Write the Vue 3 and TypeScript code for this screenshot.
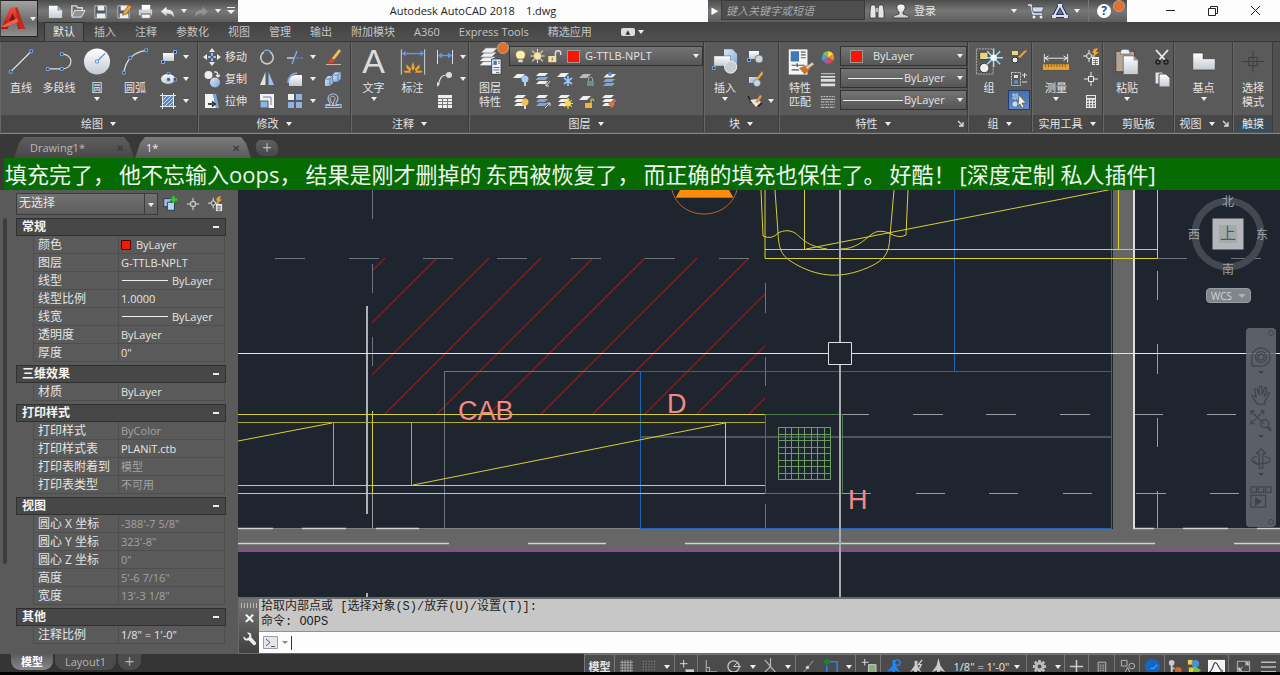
<script setup lang="ts">
import { ref } from 'vue'

interface Prop { label: string; value: string; dim?: boolean; mark?: 'swatch' | 'line' }
interface Group { title: string; rows: Prop[] }

const quick = [
  { id: 'new', label: '新建' }, { id: 'open', label: '打开' }, { id: 'save', label: '保存' },
  { id: 'saveas', label: '另存为' }, { id: 'print', label: '打印' }, { id: 'undo', label: '放弃' },
  { id: 'tri', label: '放弃列表' }, { id: 'redo', label: '重做' }, { id: 'tri', label: '重做列表' },
  { id: 'custom', label: '自定义' },
]
const tabs = ['默认', '插入', '注释', '参数化', '视图', '管理', '输出', '附加模块', 'A360', 'Express Tools', '精选应用']
const activeTab = ref('默认')
const drawTools = [
  { id: 'line', label: '直线', drop: false }, { id: 'pline', label: '多段线', drop: false },
  { id: 'circle', label: '圆', drop: true }, { id: 'arc', label: '圆弧', drop: true },
]
const drawSmall = [{ id: 'rect', label: '矩形' }, { id: 'ellipse', label: '椭圆' }, { id: 'hatch', label: '图案填充' }]
const modifyTools = [{ id: 'move', label: '移动' }, { id: 'copy', label: '复制' }, { id: 'stretch', label: '拉伸' }]
const modifySmall = [
  { id: 'rotate', label: '旋转' }, { id: 'trim', label: '修剪' }, { id: 'erase', label: '删除' },
  { id: 'mirror', label: '镜像' }, { id: 'fillet', label: '圆角' }, { id: 'explode', label: '分解' },
  { id: 'scale', label: '缩放' }, { id: 'array', label: '阵列' }, { id: 'offset', label: '偏移' },
]
const layerTools = [
  { id: 'lyoff', label: '关' }, { id: 'lyiso', label: '隔离' }, { id: 'lyfrz', label: '冻结' },
  { id: 'lylock', label: '锁定' }, { id: 'lycur', label: '置为当前' }, { id: 'lyon', label: '打开所有图层' },
  { id: 'lyuniso', label: '取消隔离' }, { id: 'lythaw', label: '解冻' }, { id: 'lyunlock', label: '解锁' },
  { id: 'lymatch', label: '匹配图层' },
]
const groups: Group[] = [
  { title: '常规', rows: [
    { label: '颜色', value: 'ByLayer', mark: 'swatch' }, { label: '图层', value: 'G-TTLB-NPLT' },
    { label: '线型', value: 'ByLayer', mark: 'line' }, { label: '线型比例', value: '1.0000' },
    { label: '线宽', value: 'ByLayer', mark: 'line' }, { label: '透明度', value: 'ByLayer' },
    { label: '厚度', value: '0"' }] },
  { title: '三维效果', rows: [{ label: '材质', value: 'ByLayer' }] },
  { title: '打印样式', rows: [
    { label: '打印样式', value: 'ByColor', dim: true }, { label: '打印样式表', value: 'PLANiT.ctb' },
    { label: '打印表附着到', value: '模型', dim: true }, { label: '打印表类型', value: '不可用', dim: true }] },
  { title: '视图', rows: [
    { label: '圆心 X 坐标', value: '-388\'-7 5/8"', dim: true }, { label: '圆心 Y 坐标', value: '323\'-8"', dim: true },
    { label: '圆心 Z 坐标', value: '0"', dim: true }, { label: '高度', value: '5\'-6 7/16"', dim: true },
    { label: '宽度', value: '13\'-3 1/8"', dim: true }] },
  { title: '其他', rows: [{ label: '注释比例', value: '1/8" = 1\'-0"' }] },
]
const caption = ['填充完了，', '他不忘输入oops，', '结果是刚才删掉的', '东西被恢复了，', '而正确的填充也保住了。', '好酷！', '[深度定制 私人插件]']
const statusA = [
  { id: 'grid', label: '栅格' }, { id: 'snap', label: '捕捉' }, { id: 'tri', label: '捕捉设置', end: true },
  { id: 'dyn', label: '动态输入', end: true }, { id: 'ortho', label: '正交' }, { id: 'polar', label: '极轴追踪' },
  { id: 'tri', label: '极轴设置' }, { id: 'isod', label: '等轴测草图' }, { id: 'tri', label: '等轴测设置', end: true },
  { id: 'otrack', label: '对象捕捉追踪' }, { id: 'osnap', label: '对象捕捉' }, { id: 'tri', label: '对象捕捉设置', end: true },
  { id: 'cycle', label: '选择循环', end: true }, { id: 'annvis', label: '注释可见性' },
  { id: 'annauto', label: '自动缩放' }, { id: 'ann', label: '注释比例' },
]
const statusB = [
  { id: 'gear', label: '切换工作空间' }, { id: 'tri', label: '工作空间列表', end: true }, { id: 'plus', label: '注释监视器', end: true },
  { id: 'qp', label: '快捷特性', end: true }, { id: 'isolate', label: '隔离对象', end: true }, { id: 'perf', label: '硬件加速', end: true },
  { id: 'key', label: '许可' }, { id: 'trusted', label: '受信任' }, { id: 'wave', label: '性能', end: true },
  { id: 'full', label: '全屏显示' }, { id: 'menu', label: '自定义' },
]
const hatch = Array.from({ length: 11 }, (_, i) => 229 + i * 52)
const cells = Array.from({ length: 9 }, (_, i) => i)
const command = ref('')
</script>

<template>
  <div class="app">
    <svg class="sprite" aria-hidden="true">
      <defs>
        <linearGradient id="gw" x1="0" y1="0" x2="0" y2="1"><stop offset="0" stop-color="#fff" /><stop offset="1" stop-color="#c3cad2" /></linearGradient>
        <linearGradient id="gb" x1="0" y1="0" x2="1" y2="1"><stop offset="0" stop-color="#dbe8f7" /><stop offset="1" stop-color="#7da7da" /></linearGradient>
        <linearGradient id="gr" x1="0" y1="0" x2="0" y2="1"><stop offset="0" stop-color="#ef5340" /><stop offset="1" stop-color="#a81610" /></linearGradient>
        <g id="sheets"><path d="M5 3h9l-3 3H2z" /><path d="M5 7h9l-3 3H2z" /><path d="M5 11h9l-3 3H2z" /></g>
      </defs>
      <symbol id="tri" viewBox="0 0 8 8"><path d="M1 2h6L4 6z" fill="#eee" /></symbol>
      <symbol id="custom" viewBox="0 0 10 10"><path d="M1 1h8v1H1zM1 4h8L5 8z" fill="#eee" /></symbol>
      <symbol id="logo" viewBox="0 0 34 32"><path d="M0 28 11 2h9l9 26h-8l-2-7h-8l-3 7z" fill="url(#gr)" /><path d="m14 9 4 9h-8z" fill="#7c1712" /><path d="m0 25 19-10 3 4L5 26z" fill="#f0614e" /><path d="M17 2h3l9 26h-6z" fill="#c02a20" /></symbol>

      <symbol id="new" viewBox="0 0 18 18"><path d="M2 3h9l5 5v8H2z" fill="url(#gw)" /><path d="M11 3v5h5z" fill="#9a9fa5" /></symbol>
      <symbol id="open" viewBox="0 0 18 18"><path d="M3 14V3h5l1 2h5v3" fill="none" stroke="#dcdcdc" stroke-width="1.5" /><path d="m3 15 3-7h11l-4 7z" fill="#8d9299" stroke="#e3e3e3" /></symbol>
      <symbol id="save" viewBox="0 0 18 18"><path d="M3 3h12v13H3z" fill="#555b63" stroke="#b8bec6" /><path d="M6 3h7v5H6zM5 11h9v5H5z" fill="#edf0f3" /></symbol>
      <symbol id="saveas" viewBox="0 0 18 18"><path d="M3 3h12v13H3z" fill="#555b63" stroke="#b8bec6" /><path d="M6 3h7v5H6zM5 11h9v5H5z" fill="#edf0f3" /><path d="m8 13 1-4 6-7 3 2-6 8z" fill="#e8a33a" stroke="#6b4512" stroke-width=".6" /></symbol>
      <symbol id="print" viewBox="0 0 18 18"><path d="M5 2h9v6H5z" fill="#fff" /><path d="M2 7h14v6H2z" fill="#cfd4da" /><path d="M4 11h11v2H4z" fill="#6a7078" /><path d="M5 12h9v4H5z" fill="#f4f4f4" stroke="#888" stroke-width=".6" /></symbol>
      <symbol id="undo" viewBox="0 0 18 18"><path d="M2 9 8 4v3c6 0 8 3 8 8-2-3-4-4-8-4v3z" fill="url(#gw)" /></symbol>
      <symbol id="redo" viewBox="0 0 18 18"><path d="M16 9 10 4v3c-6 0-8 3-8 8 2-3 4-4 8-4v3z" fill="#929292" /></symbol>

      <symbol id="line" viewBox="0 0 30 30"><path d="M4 26 26 4" stroke="#ddd" stroke-width="1.3" /><path d="M2.500 24.500h3v3h-3zM24.500 2.500h3v3h-3z" fill="#25364d" stroke="#7eb0f0" /></symbol>
      <symbol id="pline" viewBox="0 0 30 30"><path d="M3 23h15c13 0 13-16 0-16" fill="none" stroke="#ddd" stroke-width="1.3" /><path d="M1.500 21.500h3v3h-3zM16.500 21.500h3v3h-3zM16.500 5.500h3v3h-3z" fill="#25364d" stroke="#7eb0f0" /></symbol>
      <symbol id="circle" viewBox="0 0 30 30"><circle cx="15" cy="15" r="14" fill="url(#gw)" /><path d="m15 15 9-9" stroke="#5c92d8" stroke-width="1.300" /><path d="M13.500 13.500h3v3h-3z" fill="#fff" stroke="#4d8ad8" /></symbol>
      <symbol id="arc" viewBox="0 0 30 30"><path d="M3 27C5 14 13 5 27 3" fill="none" stroke="#ddd" stroke-width="1.3" /><path d="M1.500 25.500h3v3h-3zM8.500 9.500h3v3h-3zM25.500 1.500h3v3h-3z" fill="#25364d" stroke="#7eb0f0" /></symbol>
      <symbol id="rect" viewBox="0 0 18 18"><path d="M4 5h11v8H4z" fill="url(#gw)" /><path d="M2.500 12.500h3v3h-3zM14.500 2.500h3v3h-3z" fill="#25364d" stroke="#7eb0f0" /></symbol>
      <symbol id="ellipse" viewBox="0 0 18 18"><ellipse cx="9" cy="9" rx="7" ry="5" fill="url(#gw)" /><path d="M8 8h3v3H8zM8 2.500h3v2H8zM14.500 8h3v3h-3z" fill="#314a69" stroke="#7eb0f0" stroke-width=".7" /></symbol>
      <symbol id="hatch" viewBox="0 0 18 18"><path d="M4 4h10v10H4z" fill="#5f88be" /><path d="m4 8 4-4M4 12l8-8M6 14l8-8M10 14l4-4" stroke="#c7dcf6" /><path d="M1 3.500h16M1 14.500h16M3.500 1v16M14.500 1v16" stroke="#e8e8e8" /></symbol>

      <symbol id="move" viewBox="0 0 18 18"><path d="m9 0 3 4H6zM9 18l-3-4h6zM0 9l4-3v6zM18 9l-4 3V6z" fill="#e8eaed" /><path d="M9 5v8M5 9h8" stroke="#9fc1ec" stroke-width="2" /><circle cx="9" cy="9" r="1.500" fill="#355d92" /></symbol>
      <symbol id="copy" viewBox="0 0 18 18"><circle cx="5.500" cy="5" r="4" fill="#eee" /><circle cx="12" cy="12.500" r="5" fill="url(#gb)" /><path d="M11 2q4-1 4 4M13 5l2 2 2-2" fill="none" stroke="#eee" stroke-width="1.200" /></symbol>
      <symbol id="stretch" viewBox="0 0 18 18"><path d="M2 2h8l3 14H2z" fill="#f2f5f8" /><path d="m10 2 3 14h3L13 2z" fill="#7ba7dd" /><path d="M5 12h5M9 9.500l3 2.500-3 2.500" fill="none" stroke="#111" stroke-width="1.500" /></symbol>
      <symbol id="rotate" viewBox="0 0 18 18"><path d="M6 4a6.300 6.300 0 1 0 6 0" fill="none" stroke="#c9ccd0" stroke-width="1.600" /><path d="M6 3q4-2 7 1" fill="none" stroke="#7eb0f0" stroke-width="1.200" /></symbol>
      <symbol id="trim" viewBox="0 0 18 18"><path d="M1 10h7" stroke="#ddd" stroke-width="1.300" /><path d="M10 10h8" stroke="#5c92d8" stroke-dasharray="3 1" /><path d="M6 16 11 3" stroke="#7eb0f0" stroke-width="1.300" /></symbol>
      <symbol id="erase" viewBox="0 0 18 18"><path d="m8 10 7-9 2 2-7 9z" fill="#f0c24d" /><path d="m4 15 3-5 4 2-3 3z" fill="#d9482c" /><path d="M2 16.500h15" stroke="#c9b8a5" /></symbol>
      <symbol id="mirror" viewBox="0 0 18 18"><path d="M7.500 2v13H2z" fill="#dfe3e8" /><path d="M10.500 2v13H16z" fill="#9fc1ec" /></symbol>
      <symbol id="fillet" viewBox="0 0 18 18"><path d="M3 16V12q0-7 7-7h6v11z" fill="url(#gw)" /><path d="M2 13Q2 4 11 3" fill="none" stroke="#7eb0f0" stroke-width="1.500" /></symbol>
      <symbol id="explode" viewBox="0 0 18 18"><path d="m1 9 3-3h5v7l-3 3H1z" fill="url(#gb)" /><path d="m8 5 3-3h6v7l-3 3H9z" fill="url(#gb)" stroke="#4f6480" stroke-width=".7" /><path d="M1 9h5v7M6 9l3-3M8 5h6v7M14 5l3-3" fill="none" stroke="#55749c" stroke-width=".8" /></symbol>
      <symbol id="scale" viewBox="0 0 18 18"><path d="M2 2h14v14H2z" fill="#eef0f3" /><path d="M5 5h8v8" fill="none" stroke="#7a8089" /><path d="M2 9h8v7H2z" fill="#8db3e3" stroke="#4e5968" /></symbol>
      <symbol id="array" viewBox="0 0 18 18"><path d="M2 2h6v6H2z" fill="#eee" /><path d="M10 2h6v6h-6zM2 10h6v6H2zM10 10h6v6h-6z" fill="#8db3e3" /></symbol>
      <symbol id="offset" viewBox="0 0 18 18"><path d="M1 15.500h16v-3h-5c-1-2 2-3 2-6 0-6-10-6-10 0 0 3 3 4 2 6H2v3" fill="none" stroke="#9fc1ec" stroke-width="1.200" /><path d="M3 13.500h6c0-3-3-4-3-7 0-3 5-3 5 0 0 2-2 3-2 7h6" fill="none" stroke="#ddd" stroke-width=".8" /></symbol>

      <symbol id="dim" viewBox="0 0 30 30"><path d="M2.500 2v27M27.500 2v27" stroke="#ddd" /><path d="M4 6.500h22" stroke="#5c9af0" stroke-width="1.500" /><path d="m3 6.500 4-3v6zM27 6.500l-4-3v6z" fill="#5c9af0" /><path d="m15 15 2 7-2 3-2-3zM8 18l5 5-1 3-4-4zM22 18l-5 5 1 3 4-4zM5 25h6l2 2H6zM25 25h-6l-2 2h7z" fill="#f0a030" /></symbol>
      <symbol id="dimlin" viewBox="0 0 18 18"><path d="M1.500 2v14M16.500 2v14" stroke="#ddd" /><path d="M3 7.500h12" stroke="#5c9af0" stroke-width="1.400" /><path d="m2 7.500 4-3v6zM16 7.500l-4-3v6z" fill="#5c9af0" /></symbol>
      <symbol id="leader" viewBox="0 0 18 18"><circle cx="13" cy="5" r="3" fill="#ddd" /><path d="M10 5C5 5 4 9 2 15" fill="none" stroke="#ddd" stroke-width="1.200" /><path d="m1 17 0-5 3 2z" fill="#ddd" /></symbol>
      <symbol id="table" viewBox="0 0 18 18"><path d="M2 3h14v13H2z" fill="#eee" /><path d="M2 6.500h14M2 9.500h14M2 12.500h14M6.500 6v10M11.500 6v10" stroke="#777" /></symbol>

      <symbol id="layers" viewBox="0 0 30 34"><g fill="#eef0f2" stroke="#4a4a4a" stroke-width=".7"><path d="M8 16h14l-6 6H2z" /><path d="M8 11h14l-6 6H2z" /><path d="M9 6h14l-6 6H3z" /><path d="M10 1h14l-6 6H4z" /></g><path d="M17 14h11v18H17z" fill="#f2f5f8" stroke="#333" /><path d="M19 16h4v5h-4z" fill="#4179b8" /><path d="M24.500 17h2M24.500 19h2M19 24h7M19 27h7M22 30h4" stroke="#555" /></symbol>
      <symbol id="bulb" viewBox="0 0 18 18"><path d="M6 12c-4-4-2-9 3-9s7 5 3 9z" fill="#fff0b0" stroke="#d8b050" stroke-width=".5" /><path d="M6.500 13h5v3h-5z" fill="#ddd" /></symbol>
      <symbol id="sun" viewBox="0 0 18 18"><path d="M9 1v16M1 9h16M3 3l12 12M15 3 3 15" stroke="#e8dfb8" stroke-width="1.200" /><circle cx="9" cy="9" r="4.500" fill="#f4e6a8" stroke="#666" stroke-width=".5" /></symbol>
      <symbol id="lock" viewBox="0 0 18 18"><path d="M2 9h9v7H2z" fill="#f2e2a0" /><path d="M10 9V6q0-3 3-3t3 3v2" fill="none" stroke="#ddd" stroke-width="1.600" /><path d="M6.500 11v3" stroke="#555" /></symbol>
      <symbol id="lyoff" viewBox="0 0 18 18"><path d="M5 4h8l-4 4H1z" fill="#eee" /><circle cx="13" cy="9" r="3.500" fill="#a9cbf4" /><path d="M13 12v4" stroke="#ccc" stroke-width="2" /></symbol>
      <symbol id="lyiso" viewBox="0 0 18 18"><use href="#sheets" fill="#eee" /><path d="M5 7h9l-3 3H2z" fill="#7ba7dd" /><path d="m16 11-4 5M12 13v3h3" fill="none" stroke="#ddd" /></symbol>
      <symbol id="lyfrz" viewBox="0 0 18 18"><path d="M5 3h8L9 7H1z" fill="#eee" /><path d="M12 6v10M8 8l8 6M16 8l-8 6" stroke="#8fc0ff" stroke-width="1.800" /></symbol>
      <symbol id="lylock" viewBox="0 0 18 18"><path d="M5 4h8L9 8H1z" fill="#bbb" /><path d="M9 11h7v5H9z" fill="#6e8f88" /><path d="M10.500 11V8q2-2 4 0v3" fill="none" stroke="#91aaa4" /></symbol>
      <symbol id="lycur" viewBox="0 0 18 18"><use href="#sheets" fill="#7ba7dd" transform="translate(1 2)" /><path d="M7 4h9l-3 3H4z" fill="#eee" /><circle cx="10" cy="4" r="2" fill="#4f89d6" /></symbol>
      <symbol id="lyon" viewBox="0 0 18 18"><use href="#sheets" fill="#eee" /><circle cx="13" cy="10" r="3.500" fill="#f6bd52" /><path d="M13 13v4" stroke="#ddd" stroke-width="2" /></symbol>
      <symbol id="lyuniso" viewBox="0 0 18 18"><use href="#sheets" fill="#7ba7dd" /><path d="M5 3h9l-3 3H2z" fill="#eee" /><path d="m11 16 5-5M13 11h3v3" fill="none" stroke="#ddd" /></symbol>
      <symbol id="lythaw" viewBox="0 0 18 18"><use href="#sheets" fill="#eee" /><path d="M12 6v11M7 11.500h10M8 8l8 7M16 8l-8 7" stroke="#ffd84a" /><circle cx="12" cy="11.500" r="3" fill="#ffd84a" /></symbol>
      <symbol id="lyunlock" viewBox="0 0 18 18"><path d="M5 4h8L9 8H1z" fill="#eee" /><path d="M7 11h7v5H7z" fill="#f0b638" /><path d="M13 11V8q2-2 3 1" fill="none" stroke="#f0b638" stroke-width="1.300" /></symbol>
      <symbol id="lymatch" viewBox="0 0 18 18"><use href="#sheets" fill="#eee" /><path d="m8 12 4-3 3 3-3 4z" fill="#d9763a" /><path d="m13 10 3-2" stroke="#b77" stroke-width="2" /></symbol>

      <symbol id="insert" viewBox="0 0 30 30"><path d="M14 2h9l5 5v14H14z" fill="url(#gb)" /><path d="M3 9h18v11H3z" fill="url(#gw)" stroke="#444" stroke-width=".5" /><circle cx="21" cy="21" r="6.500" fill="#c7ccd2" stroke="#f4f4f4" /><path d="M1.500 20.500h3v3h-3z" fill="#25364d" stroke="#7eb0f0" /></symbol>
      <symbol id="bcreate" viewBox="0 0 18 18"><path d="M3 3h10v8H3z" fill="url(#gw)" /><circle cx="13" cy="11" r="4" fill="#cfd4da" stroke="#555" stroke-width=".6" /><path d="M1.500 10.500h3v3h-3z" fill="#25364d" stroke="#7eb0f0" /></symbol>
      <symbol id="bedit" viewBox="0 0 18 18"><path d="M3 7h8v6H3z" fill="url(#gb)" /><circle cx="11" cy="13" r="3.500" fill="#cfd4da" stroke="#666" stroke-width=".5" /><path d="m10 9 4-5 2-3 1 3-5 6z" fill="#f0a840" /></symbol>
      <symbol id="battr" viewBox="0 0 18 18"><path d="m2 4 3 6h4l4 4 3-3" fill="none" stroke="#222" stroke-width="1.500" /><path d="m4 8 6 7 5-5-5-3z" fill="#e8e8e8" /><path d="m9 10 5-7 2 1-4 7z" fill="#e8963a" /></symbol>
      <symbol id="match" viewBox="0 0 30 30"><path d="M3 2h20v27H3z" fill="#f4f6f8" /><path d="M5 4h9v11H5z" fill="#3f78b5" /><path d="M16 5h5M16 8h5M16 11h5M6 19h14M6 24h8M12 17v4" stroke="#555" stroke-width="1.300" /><path d="m14 22 8-3 4 4-6 6z" fill="#c87428" /><path d="m22 22 7-5" stroke="#e0c8a8" stroke-width="3" /></symbol>
      <symbol id="wheel" viewBox="0 0 18 18"><path d="M9 9V2a7 7 0 0 1 6 3.500z" fill="#f6d34a" /><path d="m9 9 6-3.500a7 7 0 0 1 0 7z" fill="#f08a35" /><path d="m9 9 6 3.500A7 7 0 0 1 9 16z" fill="#d8475f" /><path d="M9 9v7a7 7 0 0 1-6-3.500z" fill="#8e5fc4" /><path d="m9 9-6 3.500a7 7 0 0 1 0-7z" fill="#4a9fd8" /><path d="M9 9 3 5.500A7 7 0 0 1 9 2z" fill="#7cc24a" /></symbol>
      <symbol id="lw" viewBox="0 0 18 18"><path d="M1 2.500h16" stroke="#ddd" /><path d="M1 6h16" stroke="#ddd" stroke-width="2" /><path d="M1 10h16M1 15h16" stroke="#ddd" stroke-width="3" /></symbol>
      <symbol id="lt" viewBox="0 0 18 18"><path d="M1 3.500h16" stroke="#ddd" stroke-dasharray="2 1" /><path d="M1 6.500h16" stroke="#ddd" /><path d="M1 9.500h16M1 15.500h16" stroke="#ddd" stroke-dasharray="4 1" /><path d="M1 12.500h16" stroke="#ddd" stroke-dasharray="1 1" /></symbol>
      <symbol id="group" viewBox="0 0 30 30"><path d="M1.500 1.500h18v27h-18z" fill="none" stroke="#bbb" stroke-dasharray="2 1" /><path d="M5 5h9v8H5z" fill="#e8d67c" stroke="#333" /><circle cx="10" cy="22" r="5" fill="#eef0f2" stroke="#333" /><path d="M20 1v20M10 11h20M13 4l14 14M27 4 13 18" stroke="#a8dcff" stroke-width="1.500" /><circle cx="20" cy="11" r="3.500" fill="#eafaff" /></symbol>
      <symbol id="gedit" viewBox="0 0 18 18"><path d="M2 3h6v4H2z" fill="#e8d67c" /><circle cx="5" cy="12" r="3" fill="#eee" stroke="#333" /><path d="m8 9 6-6 3-1-1 2-6 6z" fill="#e8a23a" /></symbol>
      <symbol id="gadd" viewBox="0 0 18 18"><path d="M1.500 2.500h9v13h-9z" fill="none" stroke="#ccc" stroke-dasharray="2 1" /><path d="M4 5h4v3H4z" fill="#ddd" /><circle cx="6" cy="12" r="2" fill="#5c92d8" /><path d="M12 5h5M14.500 3v5M12 12h5" stroke="#ddd" /></symbol>
      <symbol id="gsel" viewBox="0 0 18 18"><path d="M3 3h5v5H3z" fill="#7eb0d8" stroke="#bcd" stroke-dasharray="2 1" /><circle cx="5" cy="13" r="2.500" fill="#cde" /><path d="m9 4 7 8h-4l2 4-2 1-2-4-2 2z" fill="#f4f0d0" stroke="#333" stroke-width=".5" /></symbol>
      <symbol id="measure" viewBox="0 0 30 30"><path d="M2.500 7v9M27.500 7v9M3 11.500h24M7 9l-4 2.500L7 14M23 9l4 2.500-4 2.500" fill="none" stroke="#eee" /><path d="M1 18h28v6H1z" fill="#e6a42e" /><path d="M4 18v3M7 18v3M10 18v3M13 18v3M16 18v3M19 18v3M22 18v3M25 18v3" stroke="#8a5c10" /></symbol>
      <symbol id="qsel" viewBox="0 0 18 18"><path d="M7 2v12M1 8h12" stroke="#eee" /><circle cx="7" cy="8" r="2.500" fill="#5a5a5a" stroke="#eee" /><path d="m12 1 4-1-2 4h3l-6 5 1-4h-2z" fill="#f0a530" /><path d="M10 9h7v8h-7z" fill="#eee" /><path d="M11 11.500h5M11 13.500h5M11 15.500h5M13.500 11v6" stroke="#555" stroke-width=".7" /></symbol>
      <symbol id="target" viewBox="0 0 18 18"><path d="M9 2v14M2 9h14" stroke="#eee" /><path d="M6.500 6.500h5v5h-5z" fill="#5a5a5a" stroke="#eee" /></symbol>
      <symbol id="calc" viewBox="0 0 18 18"><path d="M4 3h10v13H4z" fill="#e4e6e8" /><path d="M5 4h8v2H5z" fill="#666" /><path d="M5 8.500h8M5 11.500h8M5 14h8" stroke="#666" stroke-dasharray="2 1" stroke-width="1.500" /></symbol>
      <symbol id="paste" viewBox="0 0 30 30"><path d="M3 4h20v22H3z" fill="#b4a696" stroke="#4a4038" /><path d="M8 5q0-3 3-3h4q3 0 3 3v2H8z" fill="#eceff2" stroke="#444" stroke-width=".6" /><path d="M11 9h11l5 5v15H11z" fill="url(#gw)" stroke="#444" stroke-width=".6" /><path d="M22 9v5h5z" fill="#999" /></symbol>
      <symbol id="cut" viewBox="0 0 18 18"><path d="m3 2 9 10M15 2 6 12" stroke="#eee" stroke-width="1.800" /><circle cx="5" cy="14" r="2" fill="none" stroke="#222" stroke-width="1.500" /><circle cx="13" cy="14" r="2" fill="none" stroke="#222" stroke-width="1.500" /></symbol>
      <symbol id="copyclip" viewBox="0 0 18 18"><path d="M2 2h7l3 3v9H2z" fill="#dfe2e6" stroke="#555" /><path d="M6 4h7l4 4v9H6z" fill="url(#gw)" stroke="#555" /></symbol>
      <symbol id="base" viewBox="0 0 30 30"><path d="M3 6h11v6h13v12H3z" fill="url(#gw)" stroke="#333" stroke-width=".6" /></symbol>
      <symbol id="touch" viewBox="0 0 30 30"><path d="M15 3v24M3 15h24" stroke="#404040" /><path d="M10.500 10.500h9v9h-9z" fill="none" stroke="#3a3a3a" /></symbol>
      <symbol id="launch" viewBox="0 0 8 8"><path d="M1 1l5 5M6 2v4H2" fill="none" stroke="#ddd" stroke-width="1.300" /></symbol>

      <symbol id="bino" viewBox="0 0 18 18"><path d="M3 3h4l1 4v9H2V9zM15 3h-4l-1 4v9h6V9z" fill="#e4e6e9" stroke="#333" stroke-width=".8" /><path d="M8 6h2v4H8z" fill="#bbb" /></symbol>
      <symbol id="user" viewBox="0 0 18 18"><path d="M1 16c0-3 4-3 6-4v-2C3 6 5 2 9 2s6 4 2 8v2c2 1 6 1 6 4z" fill="url(#gw)" stroke="#333" stroke-width=".8" /></symbol>
      <symbol id="cart" viewBox="0 0 18 18"><path d="M1 3h3l2 9h9" fill="none" stroke="#dfe6ff" stroke-width="1.400" /><path d="M5 5h12l-2 5H6z" fill="#d4dbe8" stroke="#26355e" stroke-width=".6" /><circle cx="7" cy="15" r="1.500" fill="#eee" /><circle cx="14" cy="15" r="1.500" fill="#eee" /></symbol>
      <symbol id="tria" viewBox="0 0 18 18"><path d="M9 3 15 14H3z" fill="none" stroke="#26355e" stroke-width="4" /><path d="M9 3 15 14H3z" fill="none" stroke="#dbe2f0" stroke-width="2" /><path d="M7 2h4v3H7zM1 13h4v3H1zM13 13h4v3h-4z" fill="#dbe2f0" /></symbol>
      <symbol id="selmode" viewBox="0 0 18 18"><path d="M2 3h8v9H2z" fill="#9cc0ea" stroke="#234" /><path d="M6 7h8v9H6z" fill="#b9d4f3" stroke="#234" /><path d="M13 0v8M9 4h8" stroke="#37c837" stroke-width="2.500" /></symbol>
      <symbol id="wrench" viewBox="0 0 18 18"><path d="M2 5 5 8l3-1 1-3-3-3c3-1 6 1 5 5l6 7c0 2-1 3-3 3L8 10C4 11 1 9 2 5z" fill="#eee" /></symbol>
      <symbol id="prompt" viewBox="0 0 16 14"><path d="M.500.500h14v12H.500z" fill="#e4e6ec" stroke="#999eaa" /><path d="m3 3 4 3.500L3 10M8 10.500h4" fill="none" stroke="#555" /></symbol>

      <symbol id="grid" viewBox="0 0 18 18"><path d="M4.500 2v14M7.500 2v14M10.500 2v14M13.500 2v14M2 4.500h14M2 7.500h14M2 10.500h14M2 13.500h14" stroke="#bbb" stroke-width=".8" /></symbol>
      <symbol id="snap" viewBox="0 0 18 18"><path d="M3 3.500h13M3 6.500h13M3 9.500h13M3 12.500h13M3 15.500h13" stroke="#aaa" stroke-dasharray="1 2" /></symbol>
      <symbol id="dyn" viewBox="0 0 18 18"><path d="M6 2v8M2 6h8" stroke="#ddd" /><path d="M8 12h9v5H8z" fill="#ccc" /></symbol>
      <symbol id="ortho" viewBox="0 0 18 18"><path d="M4.500 2v12.500H16M4 10h4v5" fill="none" stroke="#aaa" stroke-width="1.200" /></symbol>
      <symbol id="polar" viewBox="0 0 18 18"><circle cx="8" cy="9" r="6" fill="none" stroke="#ccc" stroke-width="1.300" /><path d="M8 9h8M8 9l5-5" stroke="#ccc" /></symbol>
      <symbol id="isod" viewBox="0 0 18 18"><path d="m3 2 12 14M9 0v9l-6 6" fill="none" stroke="#bbb" stroke-width="1.200" /></symbol>
      <symbol id="otrack" viewBox="0 0 18 18"><path d="M4 16 15 3" stroke="#aaa" /><circle cx="9" cy="10" r="1.800" fill="#ccc" /></symbol>
      <symbol id="osnap" viewBox="0 0 18 18"><path d="M3 4h12v12H4V8" fill="none" stroke="#2384e8" stroke-width="1.700" /><circle cx="4" cy="4" r="3" fill="#17862b" /></symbol>
      <symbol id="cycle" viewBox="0 0 18 18"><path d="M5 1v7M2 4.500h7" stroke="#ddd" /><path d="M9 7h8v9H9z" fill="#8dae76" stroke="#ccc" /></symbol>
      <symbol id="annvis" viewBox="0 0 18 18"><path d="M8 2h3v6l5 7-5-2-2 4-2-4-5 2 6-7z" fill="#1f86f5" /><circle cx="13" cy="5" r="3" fill="none" stroke="#1f86f5" stroke-width="1.500" /></symbol>
      <symbol id="annauto" viewBox="0 0 18 18"><path d="M7 3h3v5l4 7-4-2-2 4-2-4-4 2 5-7z" fill="#ccc" /><path d="m15 2-4 5h3l-2 4" fill="none" stroke="#ccc" stroke-width="1.500" /></symbol>
      <symbol id="ann" viewBox="0 0 18 18"><path d="M9 0 11 8l5 7-5-2-2 4-2-4-5 2 5-7z" fill="#ccc" /></symbol>
      <symbol id="gear" viewBox="0 0 18 18"><path d="M9 2v14M2 9h14M4 4l10 10M14 4 4 14" stroke="#bbb" stroke-width="3" /><circle cx="9" cy="9" r="5" fill="#bbb" /><circle cx="9" cy="9" r="2" fill="#4c4c4c" /></symbol>
      <symbol id="plus" viewBox="0 0 18 18"><path d="M9 2v14M2 9h14" stroke="#ccc" stroke-width="1.600" /></symbol>
      <symbol id="qp" viewBox="0 0 18 18"><path d="M5.500 4.500h8v11h-8z" fill="none" stroke="#bbb" /><path d="M7 7.500h5M7 9.500h5M7 11.500h5M7 13.500h5" stroke="#bbb" stroke-dasharray="2 1" /></symbol>
      <symbol id="isolate" viewBox="0 0 18 18"><path d="M2.500 2.500h6v6h-6zM6 16l3-6 3 6z" fill="none" stroke="#bbb" /><circle cx="13.500" cy="8.500" r="3" fill="none" stroke="#bbb" /></symbol>
      <symbol id="perf" viewBox="0 0 18 18"><circle cx="9" cy="9" r="8" fill="#1466c4" /><path d="M7 11h3l4-4" fill="none" stroke="#56a0f0" stroke-width="1.300" /></symbol>
      <symbol id="key" viewBox="0 0 18 18"><circle cx="6" cy="5" r="3" fill="#ccc" /><path d="M6 7v9M6 11h3" stroke="#ccc" stroke-width="2" /><circle cx="13" cy="13" r="3.500" fill="#d8622c" /></symbol>
      <symbol id="trusted" viewBox="0 0 18 18"><path d="M2 2h5v5H2z" fill="#f0d040" /><circle cx="10" cy="6" r="4" fill="#4a92d8" /><path d="m4 12 6-3 6 4-4 3z" fill="#7ac040" /><path d="M3 10h5v6H3z" fill="#e8c838" /></symbol>
      <symbol id="wave" viewBox="0 0 18 18"><path d="M0 2h18v15H0z" fill="#f5f5f5" /><path d="M1 15c4 0 4-10 7-10s3 8 8 9" fill="none" stroke="#444" stroke-width="1.300" /><path d="m12 17 2-5 4 5z" fill="#e0702a" /></symbol>
      <symbol id="full" viewBox="0 0 18 18"><path d="M2.500 3.500h13v11h-13z" fill="none" stroke="#bbb" /><path d="m11 5h3v3zM7 13H4v-3z" fill="#ccc" stroke="#ccc" /><path d="m13 6-8 6" stroke="#ccc" stroke-dasharray="3 3" /></symbol>
      <symbol id="menu" viewBox="0 0 18 18"><path d="M1 4.500h16M1 9.500h16M1 14.500h16" stroke="#bbb" stroke-width="1.400" /></symbol>
      <symbol id="nwheel" viewBox="0 0 24 24"><path d="M2 21V12A10 10 0 1 1 12 22H3z" /><circle cx="12" cy="12" r="6" /><circle cx="12" cy="12" r="3.500" /></symbol>
      <symbol id="nhand" viewBox="0 0 24 24"><path d="M8 22 2 13q2-2 5 2L5 6q1-2 3 0l2 6 0-9q2-2 3 0v9l3-8q2-1 2 1l-2 8 4-4q2 0 1 2l-5 8v3z" /></symbol>
      <symbol id="nzoom" viewBox="0 0 24 24"><path d="M1 1l14 14M15 1 1 15M1 5V1h4M11 1h4v4M1 11v4h4" /><circle cx="16" cy="15" r="4.500" /><path d="m19 18 4 5" stroke-width="2.500" /></symbol>
      <symbol id="norbit" viewBox="0 0 24 24"><path d="M10 22V6H7l5-5 5 5h-3v16z" /><path d="M8 9C1 10 0 14 5 16q7 2 14 0c5-2 4-5-3-7M5 13v4l4 1" /></symbol>
      <symbol id="nmotion" viewBox="0 0 24 24"><path d="M1 1h6v6H1zM9 1h6v6H9zM17 1h6v6h-6zM1 10h16v13H1z" /><path d="m6 13 6 4-6 4z" fill="#3f454a" /></symbol>
    </svg>

    <header class="top">
      <button class="logo" aria-label="应用程序菜单"><svg class="logo-a"><use href="#logo" /></svg><svg class="tri"><use href="#tri" /></svg></button>
      <div class="titlebar">
        <div class="quick">
          <button v-for="(q, i) in quick" :key="i" :aria-label="q.label"><svg :class="q.id === 'tri' ? 'tri' : q.id === 'custom' ? 'mid' : 's'"><use :href="'#' + q.id" /></svg></button>
        </div>
        <h1 class="title"><span>Autodesk AutoCAD 2018</span><span>1.dwg</span></h1>
        <div class="info">
          <button class="expand" aria-label="展开搜索">▶</button>
          <input class="search" type="text" aria-label="搜索" placeholder="键入关键字或短语">
          <button aria-label="搜索"><svg class="s"><use href="#bino" /></svg></button>
          <button class="login"><svg class="s"><use href="#user" /></svg>登录</button>
          <button class="login-drop" aria-label="登录列表"><svg class="tri"><use href="#tri" /></svg></button>
          <button aria-label="应用商店"><svg class="s"><use href="#cart" /></svg></button>
          <button aria-label="保持连接"><svg class="s"><use href="#tria" /></svg></button>
          <button class="narrow" aria-label="连接列表"><svg class="tri"><use href="#tri" /></svg></button>
          <button class="help" aria-label="帮助"><span>?</span><i class="dot"></i></button>
        </div>
        <div class="winbtns">
          <button aria-label="最小化"><svg width="12" height="12"><path d="M1 5.500h9" stroke="#222" /></svg></button>
          <button aria-label="还原"><svg width="12" height="12"><path d="M1.500 3.500h7v7h-7zM3.500 3V1.500h7v7H9" fill="none" stroke="#222" /></svg></button>
          <button aria-label="关闭"><svg width="12" height="12"><path d="m1 1 9 9M10 1 1 10" stroke="#222" /></svg></button>
        </div>
      </div>
      <nav class="tabs" aria-label="功能区">
        <button v-for="t in tabs" :key="t" :class="{ on: t === activeTab }" @click="activeTab = t">{{ t }}</button>
        <button class="mini" aria-label="最小化功能区"><i class="pill">▲</i><svg class="tri"><use href="#tri" /></svg></button>
      </nav>
    </header>

    <div class="ribbon">
      <section class="panel">
        <div class="body">
          <div class="bigs">
            <button v-for="t in drawTools" :key="t.id" class="big"><svg class="l"><use :href="'#' + t.id" /></svg><span>{{ t.label }}</span><svg v-if="t.drop" class="tri"><use href="#tri" /></svg></button>
          </div>
          <div class="col">
            <button v-for="t in drawSmall" :key="t.id" class="split" :aria-label="t.label"><svg class="s"><use :href="'#' + t.id" /></svg><svg class="tri"><use href="#tri" /></svg></button>
          </div>
        </div>
        <button class="cap">绘图<svg class="tri"><use href="#tri" /></svg></button>
      </section>
      <section class="panel">
        <div class="body">
          <div class="col words">
            <button v-for="t in modifyTools" :key="t.id" class="word"><svg class="s"><use :href="'#' + t.id" /></svg>{{ t.label }}</button>
          </div>
          <div class="mods">
            <button v-for="(t, i) in modifySmall" :key="t.id" class="split" :aria-label="t.label"><svg class="s"><use :href="'#' + t.id" /></svg><svg v-if="i % 3 === 1" class="tri"><use href="#tri" /></svg></button>
          </div>
        </div>
        <button class="cap">修改<svg class="tri"><use href="#tri" /></svg></button>
      </section>
      <section class="panel">
        <div class="body">
          <div class="bigs annot">
            <button class="big"><b class="glyph" aria-hidden="true">A</b><span>文字</span><svg class="tri"><use href="#tri" /></svg></button>
            <button class="big"><svg class="l"><use href="#dim" /></svg><span>标注</span></button>
          </div>
          <div class="col">
            <button class="split" aria-label="线性"><svg class="s"><use href="#dimlin" /></svg><svg class="tri"><use href="#tri" /></svg></button>
            <button class="split" aria-label="引线"><svg class="s"><use href="#leader" /></svg><svg class="tri"><use href="#tri" /></svg></button>
            <button class="split" aria-label="表格"><svg class="s"><use href="#table" /></svg></button>
          </div>
        </div>
        <button class="cap">注释<svg class="tri"><use href="#tri" /></svg></button>
      </section>
      <section class="panel">
        <div class="body">
          <button class="big"><svg class="l"><use href="#layers" /></svg><span>图层<br>特性</span><i class="dot"></i></button>
          <div class="stack">
            <div class="combo">
              <svg class="s"><use href="#bulb" /></svg><svg class="s"><use href="#sun" /></svg><svg class="s"><use href="#lock" /></svg><i class="sw"></i>
              <select aria-label="图层"><option>G-TTLB-NPLT</option></select><svg class="tri"><use href="#tri" /></svg>
            </div>
            <div class="lytools"><button v-for="t in layerTools" :key="t.id" :aria-label="t.label"><svg class="s"><use :href="'#' + t.id" /></svg></button></div>
          </div>
        </div>
        <button class="cap">图层<svg class="tri"><use href="#tri" /></svg></button>
      </section>
      <section class="panel">
        <div class="body">
          <button class="big"><svg class="l"><use href="#insert" /></svg><span>插入</span><svg class="tri"><use href="#tri" /></svg></button>
          <div class="col blocks">
            <button class="split" aria-label="创建块"><svg class="s"><use href="#bcreate" /></svg></button>
            <button class="split" aria-label="编辑块"><svg class="s"><use href="#bedit" /></svg></button>
            <button class="split" aria-label="编辑属性"><svg class="s"><use href="#battr" /></svg><svg class="tri"><use href="#tri" /></svg></button>
          </div>
        </div>
        <button class="cap">块<svg class="tri"><use href="#tri" /></svg></button>
      </section>
      <section class="panel">
        <div class="body">
          <button class="big"><svg class="l"><use href="#match" /></svg><span>特性<br>匹配</span></button>
          <div class="col icons"><svg class="s"><use href="#wheel" /></svg><svg class="s"><use href="#lw" /></svg><svg class="s"><use href="#lt" /></svg></div>
          <div class="stack props">
            <div class="combo"><i class="sw"></i><select aria-label="颜色"><option>ByLayer</option></select><svg class="tri"><use href="#tri" /></svg></div>
            <div class="combo"><i class="rule"></i><select aria-label="线宽"><option>ByLayer</option></select><svg class="tri"><use href="#tri" /></svg></div>
            <div class="combo"><i class="rule long"></i><select aria-label="线型"><option>ByLayer</option></select><svg class="tri"><use href="#tri" /></svg></div>
          </div>
        </div>
        <button class="cap">特性<svg class="tri"><use href="#tri" /></svg><svg class="tri launch"><use href="#launch" /></svg></button>
      </section>
      <section class="panel">
        <div class="body">
          <button class="big"><svg class="l"><use href="#group" /></svg><span>组</span></button>
          <div class="col narrowcol">
            <button class="split" aria-label="组编辑"><svg class="s"><use href="#gedit" /></svg></button>
            <button class="split" aria-label="取消编组"><svg class="s"><use href="#gadd" /></svg></button>
            <button class="split pressed" aria-label="启用组选择"><svg class="s"><use href="#gsel" /></svg></button>
          </div>
        </div>
        <button class="cap">组<svg class="tri"><use href="#tri" /></svg></button>
      </section>
      <section class="panel">
        <div class="body spread">
          <button class="big"><svg class="l"><use href="#measure" /></svg><span>测量</span><svg class="tri"><use href="#tri" /></svg></button>
          <div class="col narrowcol">
            <button class="split" aria-label="快速选择"><svg class="s"><use href="#qsel" /></svg></button>
            <button class="split" aria-label="点坐标"><svg class="s"><use href="#target" /></svg></button>
            <button class="split" aria-label="计算器"><svg class="s"><use href="#calc" /></svg></button>
          </div>
        </div>
        <button class="cap">实用工具<svg class="tri"><use href="#tri" /></svg></button>
      </section>
      <section class="panel">
        <div class="body spread">
          <button class="big"><svg class="l"><use href="#paste" /></svg><span>粘贴</span><svg class="tri"><use href="#tri" /></svg></button>
          <div class="col narrowcol">
            <button class="split" aria-label="剪切"><svg class="s"><use href="#cut" /></svg></button>
            <button class="split" aria-label="复制剪裁"><svg class="s"><use href="#copyclip" /></svg></button>
          </div>
        </div>
        <div class="cap">剪贴板</div>
      </section>
      <section class="panel">
        <div class="body center"><button class="big"><svg class="l"><use href="#base" /></svg><span>基点</span><svg class="tri"><use href="#tri" /></svg></button></div>
        <button class="cap view">视图<svg class="tri"><use href="#tri" /></svg><svg class="tri launch"><use href="#launch" /></svg></button>
      </section>
      <section class="panel">
        <div class="body center"><button class="big"><svg class="l"><use href="#touch" /></svg><span>选择<br>模式</span></button></div>
        <div class="cap glow">触摸</div>
      </section>
    </div>

    <nav class="files" aria-label="文件">
      <button class="file">Drawing1*<span class="x">✕</span></button>
      <button class="file cur">1*<span class="x">✕</span></button>
      <button class="file add" aria-label="新图形">＋</button>
    </nav>

    <p class="banner"><span v-for="c in caption" :key="c">{{ c }}</span></p>

    <main class="work">
      <aside class="palette">
        <i class="scroll"></i>
        <div class="content">
          <div class="picker">
            <select aria-label="选择对象"><option>无选择</option></select>
            <svg class="tri"><use href="#tri" /></svg>
            <button aria-label="切换 PICKADD"><svg class="s"><use href="#selmode" /></svg></button>
            <button aria-label="选择对象"><svg class="s"><use href="#target" /></svg></button>
            <button aria-label="快速选择"><svg class="s"><use href="#qsel" /></svg></button>
          </div>
          <section v-for="g in groups" :key="g.title" class="group">
            <button class="ghead">{{ g.title }}<i></i></button>
            <table>
              <tbody>
                <tr v-for="r in g.rows" :key="r.label">
                  <th scope="row">{{ r.label }}</th>
                  <td :class="{ dim: r.dim }"><div class="val"><i v-if="r.mark" :class="r.mark"></i>{{ r.value }}</div></td>
                </tr>
              </tbody>
            </table>
          </section>
        </div>
      </aside>

      <div class="right">
        <div class="canvas">
          <svg class="drawing" viewBox="238 190 1042 407" preserveAspectRatio="xMinYMin slice" role="img" aria-label="图形">
            <clipPath id="hc"><path d="M372 258h393v156H372z" /></clipPath>
            <g fill="#666"><path d="M238 529h1042v20H238zM1113 190h20v340h-20z" /></g>
            <path d="M238 550.500h1042" stroke="#8d4a93" stroke-width="3" />
            <g clip-path="url(#hc)" stroke="#8e2026" stroke-width="1.200"><path v-for="x in hatch" :key="x" :d="`M${x} 414l156-156`" /></g>
            <g fill="none" stroke="#6d747c">
              <path d="M275 258.500h490" stroke-dasharray="30 44" />
              <path d="M1157 258.500h30M1231 258.500h30" />
              <path d="M765.500 283v30M765.500 357v29M765.500 504v24" />
              <path d="M372.500 190v29M372.500 264v29M372.500 337v29" />
              <path d="M444.500 528V371.500h196" /><path d="M640 437h472" stroke-width="2" stroke="#4d545b" />
            </g>
            <g fill="none" stroke="#989da2">
              <path d="M839 414.500h30M913 414.500h30M986 414.500h30M1060 414.500h30M1133 414.500h30M1207 414.500h29" />
              <path d="M842 493.500h29M916 493.500h29M989 493.500h29M1063 493.500h29M1136 493.500h30M1210 493.500h29" />
              <path d="M1157.500 271v29M1157.500 344v30M1157.500 418v29M1157.500 491v37" /><path d="M372.500 493v35" />
            </g>
            <path d="M367 306v208M367 593v4" stroke="#adb2b6" stroke-width="2" />
            <path d="M1134 190v338" stroke="#ddd" stroke-width="2" />
            <path d="M238 528.500h402M1133 528.500h147" stroke="#7d8386" />
            <path d="M238 528.500h35M302 528.500h44M376 528.500h43M1133 528.500h21M1183 528.500h45M1257 528.500h23M238 543.500h211M528 543.500h78M685 543.500h470M1234 543.500h46" stroke="#d0d2d2" stroke-width="1.500" />
            <g fill="none" stroke="#1d66b8"><path d="M954.500 190v181M640.500 371.500h471V528.500h-471zM1111.500 190v182" /></g>
            <g fill="none" stroke="#4c7a4c"><path d="M765.500 414.500h77v79h-77z" /></g>
            <g stroke="#6c9b62"><path v-for="i in cells" :key="i" :d="`M${778.5 + Math.round(i * 6.5)} 427v53M778 ${427.5 + Math.round(i * 6.5)}h53`" /></g>
            <g fill="none" stroke="#d8cf33">
              <path d="M238 414.500h527M238 485.500h527M238 493.500h527M372.500 411v82M725.500 423v62" />
              <path d="M238 422.500h527M333.500 423v62M411.500 423v62" stroke="#b3aa2e" />
              <path d="M238 441l94-18M413 485l312-62" />
              <path d="M765 190v68.500h392.500V190M765 249.500h392M804.500 190v59M1118.500 190v59M806 249l307-60" />
              <path d="M761 190l2 46q9 4 15-3c6-3 12-3 17 0 7 5 11 13 32 16M908 190l-2 45q-7 4-17-2-10-4-17 1c-9 7-16 15-32 15" />
              <path d="M775 190l3 43c1 20 5 24 19 32 24 13 46 13 70 3 18-8 22-14 23-32l4-46" />
            </g>
            <path d="M680 190h49l4 7h-57z" fill="#ff8b0a" /><path d="M672 190C680 222 728 222 737 190M676 197.500h57" fill="none" stroke="#b46a2c" />
            <path d="M238 353.500h1042" stroke="#e2e4e6" /><path d="M840 190v407" stroke="#a8acb0" stroke-width="2" />
            <path d="M828.500 342.500h23v22h-23z" fill="#1e252e" stroke="#dcdee0" />
            <g class="notes"><text x="458" y="420">CAB</text><text x="667" y="413">D</text><text x="848" y="509">H</text></g>
          </svg>
          <svg class="cube" viewBox="0 0 84 84" role="img" aria-label="ViewCube">
            <circle cx="42" cy="42" r="33" fill="none" stroke="#434950" stroke-width="7" />
            <path d="M26.500 26.500h31v31h-31z" fill="#b4b6ba" /><path d="M33 33h18v18H33z" fill="#a2aaae" />
            <text x="42" y="47" class="face">上</text>
            <text x="42" y="14">北</text><text x="8" y="47">西</text><text x="76" y="47">东</text><text x="42" y="82">南</text>
          </svg>
          <button class="wcs">WCS<i></i></button>
          <div class="navbar">
            <i class="ring"></i>
            <button aria-label="控制盘"><svg><use href="#nwheel" /></svg></button><em></em>
            <button aria-label="平移"><svg><use href="#nhand" /></svg></button>
            <button aria-label="缩放"><svg><use href="#nzoom" /></svg></button><em></em>
            <button aria-label="动态观察"><svg><use href="#norbit" /></svg></button><em></em>
            <button aria-label="ShowMotion"><svg><use href="#nmotion" /></svg></button>
            <i class="ring low"></i>
          </div>
        </div>
        <div class="cmd">
          <div class="grip"><i></i><button aria-label="关闭">✕</button><button aria-label="自定义"><svg class="s"><use href="#wrench" /></svg></button></div>
          <div class="cmdmain">
            <div class="history">拾取内部点或 [选择对象(S)/放弃(U)/设置(T)]:<br>命令: OOPS</div>
            <div class="entry"><button aria-label="最近使用的命令"><svg class="prompt"><use href="#prompt" /></svg><i></i></button><span class="caret"></span><input v-model="command" type="text" aria-label="命令"></div>
          </div>
        </div>
      </div>
    </main>

    <footer class="foot">
      <nav class="layouts" aria-label="布局"><button class="lay on">模型</button><button class="lay">Layout1</button><button class="lay" aria-label="新建布局">＋</button></nav>
      <div class="status">
        <button class="end"><b>模型</b></button>
        <button v-for="(s, i) in statusA" :key="i" :class="{ end: s.end }" :aria-label="s.label"><svg :class="s.id === 'tri' ? 'tri' : 's'"><use :href="'#' + s.id" /></svg></button>
        <button class="end">1/8" = 1'-0"<svg class="tri"><use href="#tri" /></svg></button>
        <button v-for="(s, i) in statusB" :key="'b' + i" :class="{ end: s.end }" :aria-label="s.label"><svg :class="s.id === 'tri' ? 'tri' : 's'"><use :href="'#' + s.id" /></svg></button>
      </div>
    </footer>
  </div>
</template>

<style>
body { margin: 0; background: #000; }
</style>

<style scoped>
* { box-sizing: border-box; }
.app { display: flex; flex-direction: column; min-height: 100vh; overflow: hidden; background: #3a3a3a; color: #e4e4e4; font: 11px/14px "Open Sans", "Noto Sans CJK SC", sans-serif; }
.sprite { position: absolute; width: 0; height: 0; }
button, input, select { margin: 0; padding: 0; border: 0; border-radius: 0; background: none; color: inherit; font: inherit; }
button { display: flex; align-items: center; justify-content: center; white-space: nowrap; min-width: 0; }
select { appearance: none; outline: 0; }
svg { display: block; flex: none; }
.s { width: 18px; height: 18px; }
.l { width: 30px; height: 30px; }
.tri { width: 8px; height: 8px; }
.mid { width: 10px; height: 10px; }
.dot { position: absolute; width: 12px; height: 12px; border-radius: 50%; background: #e0702c; border: 1px solid #b9a090; }

.top { display: grid; grid-template: 22px 19px / 38px 1fr; background: #484848; }
.logo { grid-row: 1 / 3; height: 37px; background: linear-gradient(#a2a2a2, #6c6c6c 60%, #8f8f8f); border: 1px solid #222; border-left: 1px solid #444; }
.logo-a { width: 28px; height: 28px; }
.titlebar { display: flex; background: #fdfdfd; }
.quick { display: grid; grid-template-columns: 22px 22px 24px 22px 22px 23px 10px 24px 10px 15px; width: 200px; padding-left: 6px; background: linear-gradient(#4c4c4c, #777 50%, #5c5c5c); }
.quick .s { width: 17px; height: 17px; }
.title { flex: 1; margin: 0; display: flex; align-items: center; justify-content: center; gap: 11px; color: #1c1c1c; font-size: 11px; font-weight: 400; white-space: nowrap; }
.info { display: flex; width: 419px; background: linear-gradient(#4c4c4c, #777 50%, #5c5c5c); }
.info > button { width: 24px; flex: none; }
.info > .expand { width: 13px; font-size: 8px; color: #fff; }
.search { width: 168px; padding: 0 4px; background: #4e4e4e; border: 1px solid #3b3b3b; font-style: italic; height: 20px; }
.search::placeholder { color: #a9a9a9; opacity: 1; }
.info > .login { width: 48px; gap: 4px; margin-left: 16px; }
.info > .login-drop { width: 59px; justify-content: flex-end; padding-right: 2px; margin-right: 6px; }
.info > .login { margin-left: 0; width: 50px; }
.info > .login-drop { width: 79px; padding-right: 0; }
.info > .narrow { width: 10px; }
.info > .help { position: relative; width: 39px; justify-content: flex-start; padding-left: 8px; margin-left: 6px; border-left: 1px solid #777; }
.help span { width: 14px; height: 14px; border-radius: 50%; background: #fff; color: #1c4ba0; font-weight: 700; font-size: 12px; line-height: 14px; }
.help .dot { left: 24px; top: 0; }
.winbtns { display: grid; grid-template-columns: 46px 38px 48px; width: 153px; padding-left: 21px; }
.tabs { display: flex; gap: 1px; padding-left: 6px; background: linear-gradient(#434343, #505050); color: #c4c4c4; }
.tabs button { padding: 0 9px; }
.tabs .on { background: #5c5c5c; border: 1px solid #303030; border-bottom: 0; color: #eee; padding: 0 8px; }
.tabs .mini { margin-left: 10px; gap: 2px; }
.pill { width: 14px; height: 8px; border-radius: 2px; background: #ddd; color: #333; font: 6px/8px "DejaVu Sans", sans-serif; text-align: center; }

.ribbon { display: grid; grid-template-columns: 198fr 153fr 118fr 235fr 75fr 189fr 64fr 71fr 71fr 59fr 40fr; padding: 1px 7px 2px 0; height: 93px; background: #505050; border-bottom: 1px solid #888; box-shadow: inset 0 1px #363636; }
.panel { display: flex; flex-direction: column; min-width: 0; border-right: 1px solid #3c3c3c; border-left: 1px solid #686868; background: #5a5a5a; }
.body { display: flex; height: 73px; padding: 4px 0 0 1px; }
.bigs { display: flex; }
.big { position: relative; flex-direction: column; justify-content: flex-start; align-items: center; width: 38px; flex: none; line-height: 14px; padding-top: 1px; }
.big span { margin: 5px 0 0; }
.big .l { width: 28px; height: 29px; }
.annot .big { width: 39px; padding-left: 2px; }
.glyph { height: 29px; color: #dcdcdc; font: 34px/29px "Liberation Sans", Arial, sans-serif; }
.big .dot { right: 0; top: -4px; }
.col { display: grid; grid-template-rows: 22px 22px 22px; align-content: start; padding-left: 5px; }
.split { gap: 5px; width: 34px; justify-content: flex-start; align-items: center; }
.words { padding-left: 3px; }
.word { gap: 4px; justify-content: flex-start; width: 46px; }
.mods { display: grid; grid-template: 22px 22px 22px / 28px 38px 26px; padding-left: 9px; }
.blocks { padding-left: 2px; }
.blocks .split { gap: 3px; }
.stack { flex: 1; display: flex; flex-direction: column; min-width: 0; }
.combo { display: flex; align-items: center; height: 20px; border: 1px solid #333; background: linear-gradient(#747474, #565656); padding: 0 2px; }
.combo .s { width: 17px; height: 16px; }
.combo select { flex: 1; min-width: 0; padding-left: 5px; }
.sw { width: 13px; height: 13px; background: #fb1500; border: 1px solid #999; flex: none; }
.combo .sw { margin-left: 4px; }
.lytools { display: grid; grid-template: 22px 22px / repeat(5, 22px); padding: 2px 0 0 1px; }
.icons { padding-left: 1px; width: 21px; align-items: center; }
.icons .s { width: 16px; height: 17px; }
.props { gap: 2px; }
.props .sw { margin: 0 5px 0 7px; }
.rule { width: 55px; height: 1px; background: #eee; margin-left: 5px; flex: none; }
.rule.long { width: 60px; margin-left: 0; }
.props .rule + select { padding-left: 1px; }
.narrowcol { padding-left: 0; }
.narrowcol .split { width: 22px; justify-content: center; }
.pressed { background: linear-gradient(#4a70a8, #5f8ccc); border: 1px solid #20406c; height: 20px; }
.spread { justify-content: space-between; padding-left: 4px; }
.center { justify-content: center; padding-left: 0; }
.cap { position: relative; display: flex; align-items: center; justify-content: center; gap: 6px; height: 17px; width: 100%; background: #484848; }
.launch { position: absolute; right: 2px; }
.view { padding-right: 12px; }
.glow { background: radial-gradient(ellipse at bottom, #21566f, #484848 80%); }

.files { display: flex; height: 24px; padding: 3px 0 0 14px; align-items: flex-end; background: #383838; gap: 1px; }
.file { height: 21px; width: 120px; justify-content: space-between; padding: 0 10px 0 16px; background: linear-gradient(#5e5e5e, #484848); color: #b9b9b9; clip-path: polygon(0 100%, 5px 30%, 10px 0, calc(100% - 10px) 0, calc(100% - 5px) 30%, 100% 100%); }
.file.cur { width: 116px; padding: 0 11px; background: linear-gradient(#7c7c7c, #5a5a5a); color: #eee; }
.file.add { width: 22px; height: 16px; padding: 0; margin: 0 0 2px 4px; justify-content: center; font-weight: 700; clip-path: none; border-radius: 5px 8px 5px 8px; }
.x { color: #333; font-size: 10px; }
.banner { display: flex; gap: 4px; margin: 0 0 0 4px; height: 32px; overflow: hidden; padding-left: 1px; background: #066b03; color: #eef6ee; font-size: 22px; line-height: 32px; white-space: nowrap; }

.work { flex: 1; display: flex; }
.palette { flex: none; width: 238px; display: flex; padding: 3px 12px 0 3px; background: #5a5a5a; }
.scroll { width: 4px; margin: 25px 9px 90px 0; border-radius: 2px; background: #3d3d3d; }
.content { flex: 1; min-width: 0; }
.picker { display: grid; grid-template-columns: 142px 23px 23px 22px; justify-content: space-between; height: 22px; margin-bottom: 3px; align-items: center; position: relative; }
.picker select { height: 22px; padding: 0 2px 2px; border: 1px solid #3b3b3b; background: linear-gradient(#3b3b3b, #3b3b3b) 127px 0 / 1px 22px no-repeat, linear-gradient(#727272, #5c5c5c); font-size: 12px; }
.picker > .tri { position: absolute; left: 131px; top: 8px; }
.picker .s { width: 16px; height: 16px; }
.group { padding-bottom: 3px; }
.ghead { width: 100%; height: 18px; justify-content: space-between; padding: 0 6px 0 5px; border: 1px solid #303030; background: #474747; color: #f4f4f4; font-size: 12px; font-weight: 700; }
.ghead i { width: 6px; height: 2px; background: #eee; }
table { width: 192px; margin-left: 17px; border-collapse: separate; border-spacing: 0; table-layout: fixed; }
th, td { height: 18px; padding: 0 0 0 4px; border-bottom: 1px solid #4e4e4e; border-left: 1px solid #4e4e4e; text-align: left; font-weight: 400; line-height: 16px; white-space: nowrap; }
th { width: 85px; font-size: 12px; }
td { padding-left: 2px; border-right: 1px solid #4e4e4e; }
.dim { color: #a2a2a2; }
.val { display: flex; align-items: center; height: 17px; }
.swatch { width: 10px; height: 10px; margin: 0 5px 0 0; background: #f41800; border: 1px solid #500; border-radius: 1px; }
.line { width: 46px; height: 1px; margin: 0 4px 0 1px; background: #eee; }

.right { flex: 1; min-width: 0; display: flex; flex-direction: column; }
.canvas { position: relative; flex: 1 1 0; min-height: 0; overflow: hidden; background: #1e252e; }
.drawing { position: absolute; inset: 0; width: 100%; height: 100%; }
.notes { fill: #f28b85; font: 27px "Liberation Sans", Arial, sans-serif; }
.cube { position: absolute; right: 10px; top: 2px; width: 84px; height: 84px; font-size: 12px; text-anchor: middle; fill: #9da2a7; }
.face { font-size: 16px; fill: #565b60; }
.wcs { position: absolute; right: 29px; top: 98px; width: 45px; height: 15px; border-radius: 4px; background: #80868b; border: 1px solid #969ca1; color: #d0d3d5; font-size: 10px; gap: 6px; }
.wcs i { border: 4px solid transparent; border-top-color: #adb1b4; border-bottom: 0; }
.navbar { position: absolute; right: 4px; top: 138px; width: 30px; height: 199px; padding: 16px 0 0; border-radius: 4px; background: rgba(100, 107, 113, .85); display: flex; flex-direction: column; align-items: center; }
.navbar svg { width: 22px; height: 22px; fill: none; stroke: #3f454a; stroke-width: 1.3; }
.navbar button { height: 26px; }
.navbar em { height: 10px; border: 3px solid transparent; border-top-color: #3b4146; margin: 1px 0; }
.ring { position: absolute; right: 2px; top: 2px; width: 6px; height: 6px; border: 1px solid #3f454a; border-radius: 50%; }
.ring.low { top: auto; bottom: 2px; }

.cmd { display: flex; flex: none; height: 57px; padding: 2px 0 1px 1px; background: #6a6a6a; }
.grip { width: 20px; display: flex; flex-direction: column; align-items: center; padding-top: 4px; gap: 3px; background: linear-gradient(#777, #404040); }
.grip i { width: 16px; height: 5px; background: repeating-linear-gradient(90deg, #bbb 0 1px, transparent 1px 3px); }
.grip button { height: 14px; font-size: 13px; font-weight: 700; color: #fff; }
.grip button + button { height: 22px; }
.grip .s { width: 15px; height: 15px; }
.cmdmain { flex: 1; min-width: 0; }
.history { height: 33px; padding: 1px 2px; background: #c7c7c7; color: #222; border-bottom: 1px solid #909090; font: 12px/15px "Liberation Mono", "Noto Sans CJK SC", monospace; }
.entry { display: flex; align-items: center; height: 21px; padding-left: 4px; background: #fdfdfd; }
.entry button { gap: 3px; }
.prompt { width: 16px; height: 14px; }
.entry i { border: 3px solid transparent; border-top-color: #888; border-bottom: 0; }
.caret { width: 1px; height: 14px; margin-left: 3px; background: #333; }
.entry input { flex: 1; outline: 0; color: #222; }

.foot { display: flex; flex: none; height: 21px; background: #353535; border-bottom: 3px solid #000; justify-content: space-between; overflow: hidden; }
.layouts { display: flex; padding-left: 11px; gap: 2px; }
.lay { height: 16px; padding: 0 10px; background: #4c4c4c; color: #b4b4b4; border-radius: 0 0 9px 9px; }
.lay.on { background: linear-gradient(#5c5c5c, #878787); color: #fff; font-weight: 700; }
.lay:last-child { padding: 0 6px; font-weight: 700; }
.status { display: grid; grid-template-columns: 30px 22px 22px 16px 23px 24px 24px 13px 22px 15px 23px 24px 13px 25px 24px 22px 22px 78px 24px 14px 24px 26px 25px 25px 18px 22px 24px 28px 23px; height: 24px; background: #4b4b4b; border-top: 1px solid #777; border-left: 1px solid #777; }
.status .s { width: 17px; height: 17px; }
.status button { gap: 4px; }
.status .end { border-right: 1px solid #777; }
</style>
